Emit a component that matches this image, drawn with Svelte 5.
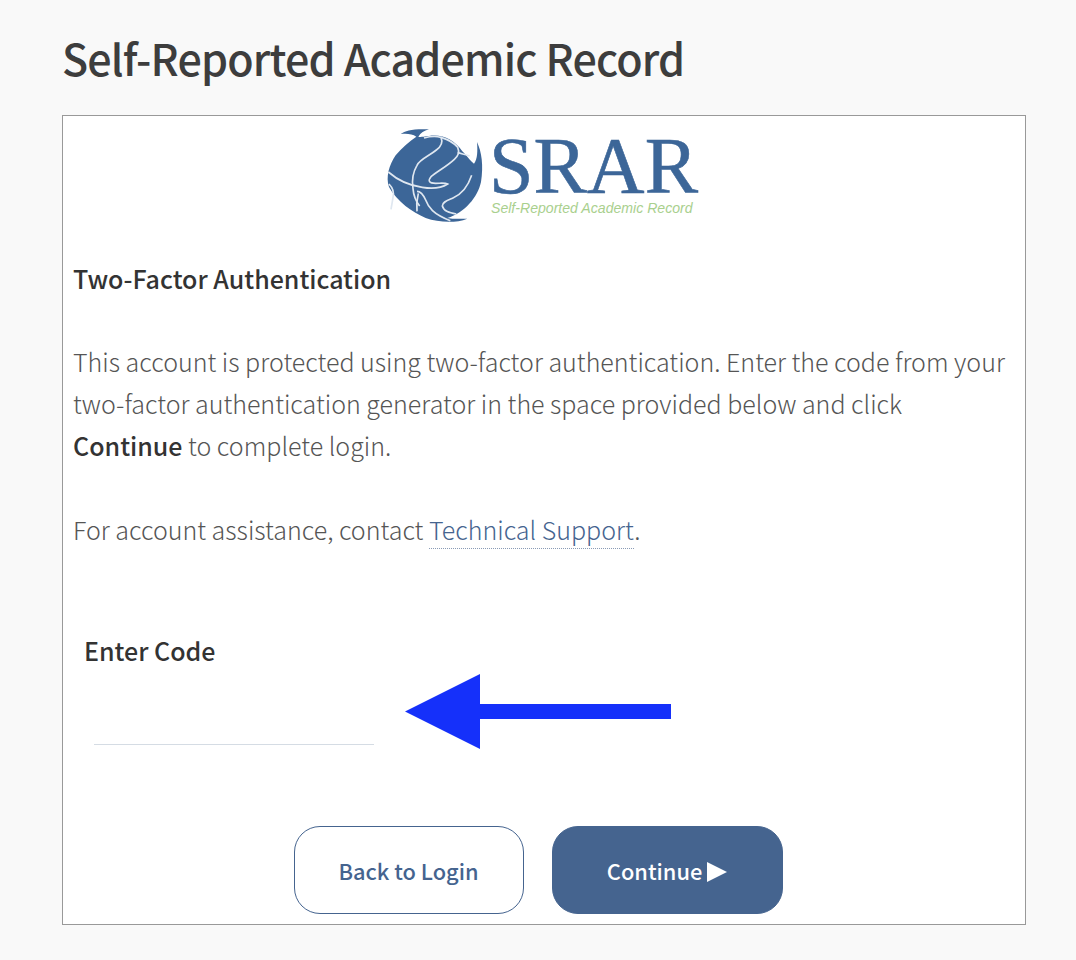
<script>
    let code = "";
</script>

<div class="page">
    <h1>Self-Reported Academic Record</h1>

    <div class="panel">
        <div class="logo">
            <svg class="globe" width="110" height="106" viewBox="0 0 330 318">
                <path class="ball" d="M65 36 C80 26 100 20 150 22 C135 26 125 32 118 44 C124 46 132 44 150 42 C190 36 225 52 250 88 C262 100 275 118 285 125 C296 112 296 85 294 60 C308 90 314 130 306 180 C296 225 258 272 205 288 C225 292 245 290 265 290 C230 304 180 302 140 288 C100 270 55 240 30 195 C20 165 30 130 50 100 C68 78 92 58 112 44 C100 36 85 34 65 36 Z"/>
                <g class="lines">
                    <path d="M135 48 C150 44 170 42 186 46 C192 60 188 72 172 84 C150 102 122 112 114 130 C102 150 98 175 102 200 C104 225 112 240 122 252"/>
                    <path d="M186 46 C205 52 225 62 236 76 C242 90 240 100 226 112 C205 132 175 148 156 164 C146 176 150 184 170 184 C185 184 198 182 206 186 C190 196 165 202 130 196 C100 192 60 178 28 150"/>
                    <path d="M236 92 C250 96 262 98 272 102"/>
                    <path d="M114 208 C124 208 132 216 140 234 C148 256 162 276 214 296"/>
                    <path d="M118 214 C114 230 112 250 114 268"/>
                    <path d="M278 160 C268 190 250 216 222 228 C204 236 190 240 190 252 C194 268 212 272 232 276"/>
                    <path d="M30 186 C40 196 46 210 42 226 C40 240 38 250 36 262"/>
                </g>
            </svg>
            <div class="wordmark">
                <span class="srar">SRAR</span>
                <span class="tagline">Self-Reported Academic Record</span>
            </div>
        </div>

        <p class="title"><strong>Two-Factor Authentication</strong></p>

        <p class="body-text">
            This account is protected using two-factor authentication. Enter the code from your
            two-factor authentication generator in the space provided below and click
            <strong>Continue</strong> to complete login.
        </p>

        <p class="body-text assist">
            For account assistance, contact <a href="#support">Technical Support</a>.
        </p>

        <div class="field">
            <label for="code">Enter Code</label>
            <input id="code" type="text" bind:value={code}>
            <svg class="arrow" width="268" height="76" viewBox="0 0 268 76">
                <path d="M0 37.5 L75 0 V30 H266 V45 H75 V75 Z"/>
            </svg>
        </div>

        <div class="actions">
            <button class="btn outline">Back to Login</button>
            <button class="btn solid">Continue <svg width="20" height="20" viewBox="0 0 20 20"><path d="M0 0 L20 10 L0 20 Z"/></svg></button>
        </div>
    </div>
</div>

<style>
    :global(body) {
        background-color: #f9f9f9;
    }
    .page {
        padding: 27px 50px 35px 62px;
        font-family: "Noto Sans CJK SC", "Noto Sans", sans-serif;
        color: #333;
    }
    h1 {
        margin: 0 0 28px 0;
        font-size: 43px;
        line-height: 60px;
        font-weight: 500;
        letter-spacing: -0.84px;
        color: #3d3d3d;
    }
    .panel {
        box-sizing: border-box;
        height: 810px;
        padding: 0 10px;
        background-color: #fff;
        border: 1px solid #999;
    }
    .logo {
        display: flex;
        justify-content: center;
        align-items: flex-start;
        padding: 6px 0 0 0;
        margin-right: 8px;
        height: 102px;
    }
    .globe {
        flex: none;
    }
    .ball {
        fill: #3c6698;
    }
    .lines path {
        fill: none;
        stroke: #dfe7f0;
        stroke-width: 5;
    }
    .wordmark {
        display: flex;
        flex-direction: column;
        width: 212px;
        padding-top: 9px;
    }
    .srar {
        font-family: "Liberation Serif", serif;
        font-size: 80px;
        line-height: 70px;
        height: 70px;
        color: #3c6698;
        -webkit-text-stroke: 0.6px #3c6698;
        white-space: nowrap;
    }
    .tagline {
        font-family: "Liberation Sans", sans-serif;
        font-style: italic;
        font-size: 14.1px;
        line-height: 14px;
        margin-left: 2px;
        color: #a9d08e;
        white-space: nowrap;
    }
    p {
        margin: 0;
    }
    .title {
        margin-top: 33px;
        font-size: 25px;
        line-height: 42px;
    }
    strong {
        font-weight: 500;
        color: #333;
    }
    .body-text {
        font-size: 25px;
        line-height: 42px;
        font-weight: 300;
        color: #555;
    }
    .title + .body-text {
        margin-top: 41px;
    }
    .assist {
        margin-top: 42px;
    }
    a {
        color: #45648f;
        text-decoration: none;
        padding-bottom: 1px;
        border-bottom: 1px dotted #8a9bb5;
    }
    .field {
        position: relative;
        margin-top: 82px;
        padding-left: 11px;
    }
    label {
        display: block;
        font-size: 25px;
        line-height: 36px;
        font-weight: 500;
    }
    input {
        display: block;
        box-sizing: border-box;
        width: 280px;
        height: 77px;
        margin-left: 10px;
        border: none;
        border-bottom: 1px solid #d5dce4;
        background: transparent;
        outline: none;
        font: inherit;
    }
    .arrow {
        position: absolute;
        left: 332px;
        top: 42px;
    }
    .arrow path {
        fill: #1530fa;
    }
    .actions {
        display: flex;
        justify-content: center;
        gap: 28px;
        margin-top: 81px;
        margin-right: 12px;
    }
    .btn {
        box-sizing: border-box;
        width: 231px;
        height: 88px;
        border-radius: 26px;
        font-family: inherit;
        font-size: 21.8px;
        font-weight: 500;
        border: 1px solid #45648f;
    }
    .outline {
        width: 230px;
        background-color: #fff;
        color: #45648f;
    }
    .solid {
        background-color: #45648f;
        color: #fff;
    }
    .solid svg {
        vertical-align: -2px;
    }
    .solid path {
        fill: #fff;
    }
</style>
